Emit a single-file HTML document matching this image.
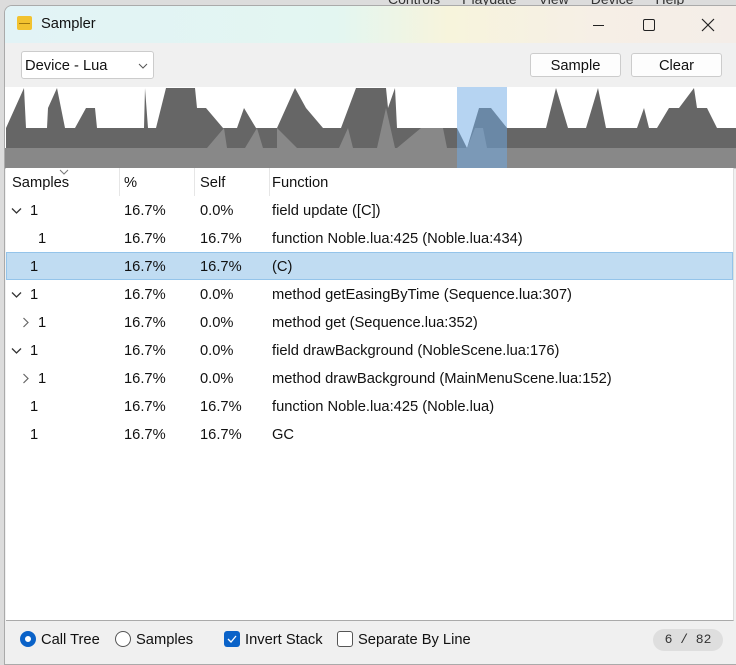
<!DOCTYPE html>
<html><head><style>
*{margin:0;padding:0;box-sizing:border-box}
body{width:736px;height:656px;overflow:hidden;background:#dcdcdc;font-family:"Liberation Sans",sans-serif;font-size:14.7px;color:#111;position:relative}
.menu{position:absolute;top:-9px;left:388px;font-size:14px;color:#333;word-spacing:0}
.menu span{margin-right:22px}
.win{position:absolute;left:4px;top:5px;width:740px;height:660px;background:#f0f0f0;border:1px solid #aaa;border-radius:8px 0 0 0;overflow:hidden}
.title{height:37px;background:linear-gradient(90deg,#e2f3f6 0%,#e3f6f1 45%,#f7f4dc 60%,#f6efe6 80%,#f4ede8 100%);position:relative}
.ico{position:absolute;left:12px;top:10px;width:15px;height:14px;background:#f2c230;border-radius:2px}
.ico:after{content:"";position:absolute;left:2px;right:2px;top:7px;height:1px;background:#a07810}
.title .t{position:absolute;left:36px;top:10px;font-size:14.7px}
.abs{position:absolute}
.combo{left:16px;top:45px;width:133px;height:28px;background:#fff;border:1px solid #ccc;border-radius:3px;padding:6px 3px;}
.btn{top:47px;height:24px;background:#fdfdfd;border:1px solid #ccc;border-radius:3px;text-align:center;line-height:24px}
.table{position:absolute;left:1px;top:162px;width:728px;height:453px;background:#fff;border-right:1px solid #ddd;border-bottom:1px solid #aaa}
.hd{height:28px;position:relative}
.hd div{position:absolute;top:7px}
.sep{position:absolute;top:0;width:1px;height:28px;background:#e6e6e6}
.row{height:28px;position:relative}
.row div{position:absolute;top:7px}
.sel{background:#c0dcf2;border:1px solid #94c4ea}
.c1{left:24px}.c2{left:118px}.c3{left:194px}.c4{left:266px}
.row svg{position:absolute;top:11px}
.foot{position:absolute;left:0;top:616px;width:740px;height:40px}
.radio{position:absolute;width:16px;height:16px;border-radius:50%;border:1px solid #555;background:#fff}
.cb{position:absolute;width:16px;height:16px;border-radius:3px}
</style></head><body>
<div class="menu"><span>Controls</span><span>Playdate</span><span>View</span><span>Device</span><span>Help</span></div>
<div class="win">
 <div class="title"><div class="ico"></div><div class="t">Sampler</div>
  <svg class="abs" style="left:580px;top:12px" width="140" height="14"><line x1="8" y1="7.5" x2="19" y2="7.5" stroke="#222"/><rect x="58.5" y="1.5" width="11" height="11" rx="1.5" fill="none" stroke="#222"/><path d="M117 1 L129 13 M129 1 L117 13" stroke="#222" stroke-width="1.2"/></svg>
 </div>
 <div class="abs combo">Device - Lua<svg class="abs" style="left:116px;top:11px" width="10" height="6"><path d="M1 1 L5 5 L9 1" fill="none" stroke="#555"/></svg></div>
 <div class="abs btn" style="left:525px;width:91px">Sample</div>
 <div class="abs btn" style="left:626px;width:91px">Clear</div>
 <svg class="abs" style="left:0;top:81px" width="732" height="82" viewBox="4 86 732 82">
  <rect x="4" y="86" width="732" height="82" fill="#fff"/>
  <rect x="4" y="147" width="732" height="20" fill="#888"/>
  <polygon fill="#666" points="5,147 5,127 23,87 25,127 46,127 47,107 56,87 64,127 74,127 85,107 94,107 96,127 143,127 144,87 147,127 155,127 165,87 194,87 196,107 205,107 222,127 236,127 243,107 255,127 276,127 294,87 305,107 322,127 340,127 355,87 385,87 387,107 394,87 396,127 456,127 456,147"/>
  <polygon fill="#888" points="206,147 223,127 226,147"/>
  <polygon fill="#888" points="244,147 256,127 262,147"/>
  <polygon fill="#888" points="276,127 296,147 276,147"/>
  <polygon fill="#888" points="338,147 347,127 352,147"/>
  <polygon fill="#888" points="376,147 385,107 394,147"/>
  <polygon fill="#888" points="396,147 420,127 442,127 446,147"/>
  <polygon fill="#666" points="456,147 456,127 466,147 478,107 490,107 506,127 506,147"/>
  <polygon fill="#888" points="466,147 474,127 482,127 490,167 478,167"/>
  <polygon fill="#666" points="506,147 506,127 545,127 555,87 567,127 585,127 597,87 605,127 636,127 643,107 648,127 656,127 668,107 678,107 693,87 696,107 706,107 716,127 736,127 736,147"/>
  <rect x="456" y="86" width="50" height="82" fill="rgba(110,170,230,0.5)"/>
  <line x1="4" y1="167.5" x2="736" y2="167.5" stroke="#ccc"/>
 </svg>
 <div class="table">
  <div class="hd"><div style="left:6px">Samples</div><svg class="abs" style="left:53px;top:1px" width="10" height="6"><path d="M1 1 L5 5 L9 1" fill="none" stroke="#777"/></svg><span class="sep" style="left:113px"></span><div style="left:118px">%</div><span class="sep" style="left:188px"></span><div style="left:194px">Self</div><span class="sep" style="left:263px"></span><div style="left:266px">Function</div></div>
  <div class="row"><svg style="left:5px" width="12" height="8"><path d="M1 1.5 L5.5 6 L10 1.5" fill="none" stroke="#333" stroke-width="1.3"/></svg><div class="c1">1</div><div class="c2">16.7%</div><div class="c3">0.0%</div><div class="c4">field update ([C])</div></div>
  <div class="row"><div style="left:32px">1</div><div class="c2">16.7%</div><div class="c3">16.7%</div><div class="c4">function Noble.lua:425 (Noble.lua:434)</div></div>
  <div class="row sel"><div style="left:23px;top:6px">1</div><div class="c2" style="left:117px;top:6px">16.7%</div><div class="c3" style="left:193px;top:6px">16.7%</div><div class="c4" style="left:265px;top:6px">(C)</div></div>
  <div class="row"><svg style="left:5px" width="12" height="8"><path d="M1 1.5 L5.5 6 L10 1.5" fill="none" stroke="#333" stroke-width="1.3"/></svg><div class="c1">1</div><div class="c2">16.7%</div><div class="c3">0.0%</div><div class="c4">method getEasingByTime (Sequence.lua:307)</div></div>
  <div class="row"><svg style="left:16px;top:9px" width="8" height="12"><path d="M1.5 1 L6 5.5 L1.5 10" fill="none" stroke="#666" stroke-width="1.2"/></svg><div style="left:32px">1</div><div class="c2">16.7%</div><div class="c3">0.0%</div><div class="c4">method get (Sequence.lua:352)</div></div>
  <div class="row"><svg style="left:5px" width="12" height="8"><path d="M1 1.5 L5.5 6 L10 1.5" fill="none" stroke="#333" stroke-width="1.3"/></svg><div class="c1">1</div><div class="c2">16.7%</div><div class="c3">0.0%</div><div class="c4">field drawBackground (NobleScene.lua:176)</div></div>
  <div class="row"><svg style="left:16px;top:9px" width="8" height="12"><path d="M1.5 1 L6 5.5 L1.5 10" fill="none" stroke="#666" stroke-width="1.2"/></svg><div style="left:32px">1</div><div class="c2">16.7%</div><div class="c3">0.0%</div><div class="c4">method drawBackground (MainMenuScene.lua:152)</div></div>
  <div class="row"><div class="c1">1</div><div class="c2">16.7%</div><div class="c3">16.7%</div><div class="c4">function Noble.lua:425 (Noble.lua)</div></div>
  <div class="row"><div class="c1">1</div><div class="c2">16.7%</div><div class="c3">16.7%</div><div class="c4">GC</div></div>
 </div>
 <div class="foot">
  <div class="radio" style="left:15px;top:9px;background:#fff;border:5px solid #0a62c8"></div>
  <div class="abs" style="left:36px;top:10px">Call Tree</div>
  <div class="radio" style="left:110px;top:9px"></div>
  <div class="abs" style="left:131px;top:10px">Samples</div>
  <div class="cb" style="left:219px;top:9px;background:#0a62c8"><svg width="16" height="16"><path d="M4 8 L7 11 L12 5" fill="none" stroke="#fff" stroke-width="1.3"/></svg></div>
  <div class="abs" style="left:240px;top:10px">Invert Stack</div>
  <div class="cb" style="left:332px;top:9px;border:1px solid #555;background:#fff"></div>
  <div class="abs" style="left:353px;top:10px">Separate By Line</div>
  <div class="abs" style="left:648px;top:7px;width:70px;height:22px;border-radius:11px;background:#dedede;font-family:'Liberation Mono',monospace;font-size:13px;text-align:center;line-height:22px;color:#333">6 / 82</div>
 </div>
</div>
</body></html>
